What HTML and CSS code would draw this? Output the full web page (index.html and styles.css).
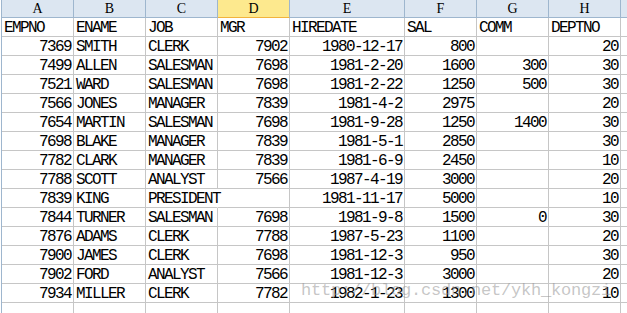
FILE: index.html
```html
<!DOCTYPE html>
<html>
<head>
<meta charset="utf-8">
<link rel="stylesheet" href="styles.css">
</head>
<body>
<div class="sheet">
  <div class="row hdr">
    <div class="h">A</div><div class="h">B</div><div class="h">C</div><div class="h sel">D</div><div class="h">E</div><div class="h">F</div><div class="h">G</div><div class="h">H</div><div class="h end"></div>
  </div>
  <div class="row">
    <div class="c">EMPNO</div><div class="c">ENAME</div><div class="c">JOB</div><div class="c">MGR</div><div class="c">HIREDATE</div><div class="c">SAL</div><div class="c">COMM</div><div class="c">DEPTNO</div><div class="c end"></div>
  </div>
  <div class="row">
    <div class="c n">7369</div><div class="c">SMITH</div><div class="c">CLERK</div><div class="c n">7902</div><div class="c n">1980-12-17</div><div class="c n">800</div><div class="c n"></div><div class="c n">20</div><div class="c end"></div>
  </div>
  <div class="row">
    <div class="c n">7499</div><div class="c">ALLEN</div><div class="c">SALESMAN</div><div class="c n">7698</div><div class="c n">1981-2-20</div><div class="c n">1600</div><div class="c n">300</div><div class="c n">30</div><div class="c end"></div>
  </div>
  <div class="row">
    <div class="c n">7521</div><div class="c">WARD</div><div class="c">SALESMAN</div><div class="c n">7698</div><div class="c n">1981-2-22</div><div class="c n">1250</div><div class="c n">500</div><div class="c n">30</div><div class="c end"></div>
  </div>
  <div class="row">
    <div class="c n">7566</div><div class="c">JONES</div><div class="c">MANAGER</div><div class="c n">7839</div><div class="c n">1981-4-2</div><div class="c n">2975</div><div class="c n"></div><div class="c n">20</div><div class="c end"></div>
  </div>
  <div class="row">
    <div class="c n">7654</div><div class="c">MARTIN</div><div class="c">SALESMAN</div><div class="c n">7698</div><div class="c n">1981-9-28</div><div class="c n">1250</div><div class="c n">1400</div><div class="c n">30</div><div class="c end"></div>
  </div>
  <div class="row">
    <div class="c n">7698</div><div class="c">BLAKE</div><div class="c">MANAGER</div><div class="c n">7839</div><div class="c n">1981-5-1</div><div class="c n">2850</div><div class="c n"></div><div class="c n">30</div><div class="c end"></div>
  </div>
  <div class="row">
    <div class="c n">7782</div><div class="c">CLARK</div><div class="c">MANAGER</div><div class="c n">7839</div><div class="c n">1981-6-9</div><div class="c n">2450</div><div class="c n"></div><div class="c n">10</div><div class="c end"></div>
  </div>
  <div class="row">
    <div class="c n">7788</div><div class="c">SCOTT</div><div class="c">ANALYST</div><div class="c n">7566</div><div class="c n">1987-4-19</div><div class="c n">3000</div><div class="c n"></div><div class="c n">20</div><div class="c end"></div>
  </div>
  <div class="row">
    <div class="c n">7839</div><div class="c">KING</div><div class="c ovf">PRESIDENT</div><div class="c n"></div><div class="c n">1981-11-17</div><div class="c n">5000</div><div class="c n"></div><div class="c n">10</div><div class="c end"></div>
  </div>
  <div class="row">
    <div class="c n">7844</div><div class="c">TURNER</div><div class="c">SALESMAN</div><div class="c n">7698</div><div class="c n">1981-9-8</div><div class="c n">1500</div><div class="c n">0</div><div class="c n">30</div><div class="c end"></div>
  </div>
  <div class="row">
    <div class="c n">7876</div><div class="c">ADAMS</div><div class="c">CLERK</div><div class="c n">7788</div><div class="c n">1987-5-23</div><div class="c n">1100</div><div class="c n"></div><div class="c n">20</div><div class="c end"></div>
  </div>
  <div class="row">
    <div class="c n">7900</div><div class="c">JAMES</div><div class="c">CLERK</div><div class="c n">7698</div><div class="c n">1981-12-3</div><div class="c n">950</div><div class="c n"></div><div class="c n">30</div><div class="c end"></div>
  </div>
  <div class="row">
    <div class="c n">7902</div><div class="c">FORD</div><div class="c">ANALYST</div><div class="c n">7566</div><div class="c n">1981-12-3</div><div class="c n">3000</div><div class="c n"></div><div class="c n">20</div><div class="c end"></div>
  </div>
  <div class="row">
    <div class="c n">7934</div><div class="c">MILLER</div><div class="c">CLERK</div><div class="c n">7782</div><div class="c n">1982-1-23</div><div class="c n">1300</div><div class="c n"></div><div class="c n">10</div><div class="c end"></div>
  </div>
  <div class="row">
    <div class="c"></div><div class="c"></div><div class="c"></div><div class="c"></div><div class="c"></div><div class="c"></div><div class="c"></div><div class="c"></div><div class="c end"></div>
  </div>
</div>
<div class="watermark">http://blog.csdn.net/ykh_kongzi</div>
</body>
</html>
```
FILE: styles.css
```css
html, body {
  margin: 0;
  padding: 0;
  background: #ffffff;
  overflow: hidden;
  width: 627px;
  height: 313px;
}
body {
  position: relative;
  font-family: "Liberation Mono", "DejaVu Sans Mono", monospace;
  font-size: 16px;
  letter-spacing: -1.6px;
  color: #000000;
}
.sheet {
  margin-left: 1px;
  border-left: 1px solid #9eb6ce;
  width: 625px;
}
.row {
  display: grid;
  grid-template-columns: 72px 72px 72px 72px 115px 72px 72px 72px 6px;
  height: 19px;
}
.hdr {
  height: 18px;
  background: #dce6f1;
}
.h {
  box-sizing: border-box;
  border-right: 1px solid #9eb6ce;
  border-bottom: 1px solid #9eb6ce;
  text-align: center;
  font-family: "Liberation Serif", "DejaVu Serif", serif;
  font-size: 14px;
  letter-spacing: 0;
  line-height: 18px;
  height: 18px;
  overflow: hidden;
}
.h.sel {
  background: #fde98e;
  border-bottom: 1px solid #f2b33d;
}
.c {
  box-sizing: border-box;
  border-right: 1px solid #c6c6c6;
  border-bottom: 1px solid #c6c6c6;
  height: 19px;
  line-height: 17px;
  padding: 2px 2px 0 2px;
  white-space: nowrap;
  overflow: hidden;
}
.n {
  text-align: right;
  padding-right: 2px;
}
.end {
  border-right: 0;
}
.ovf {
  border-right-color: transparent;
  overflow: visible;
  position: relative;
  z-index: 1;
}
.watermark {
  position: absolute;
  left: 301px;
  top: 281px;
  font-family: "Liberation Mono", "DejaVu Sans Mono", monospace;
  font-size: 17px;
  letter-spacing: -0.2px;
  line-height: 20px;
  color: rgba(150, 150, 150, 0.55);
  white-space: nowrap;
  pointer-events: none;
}
```
